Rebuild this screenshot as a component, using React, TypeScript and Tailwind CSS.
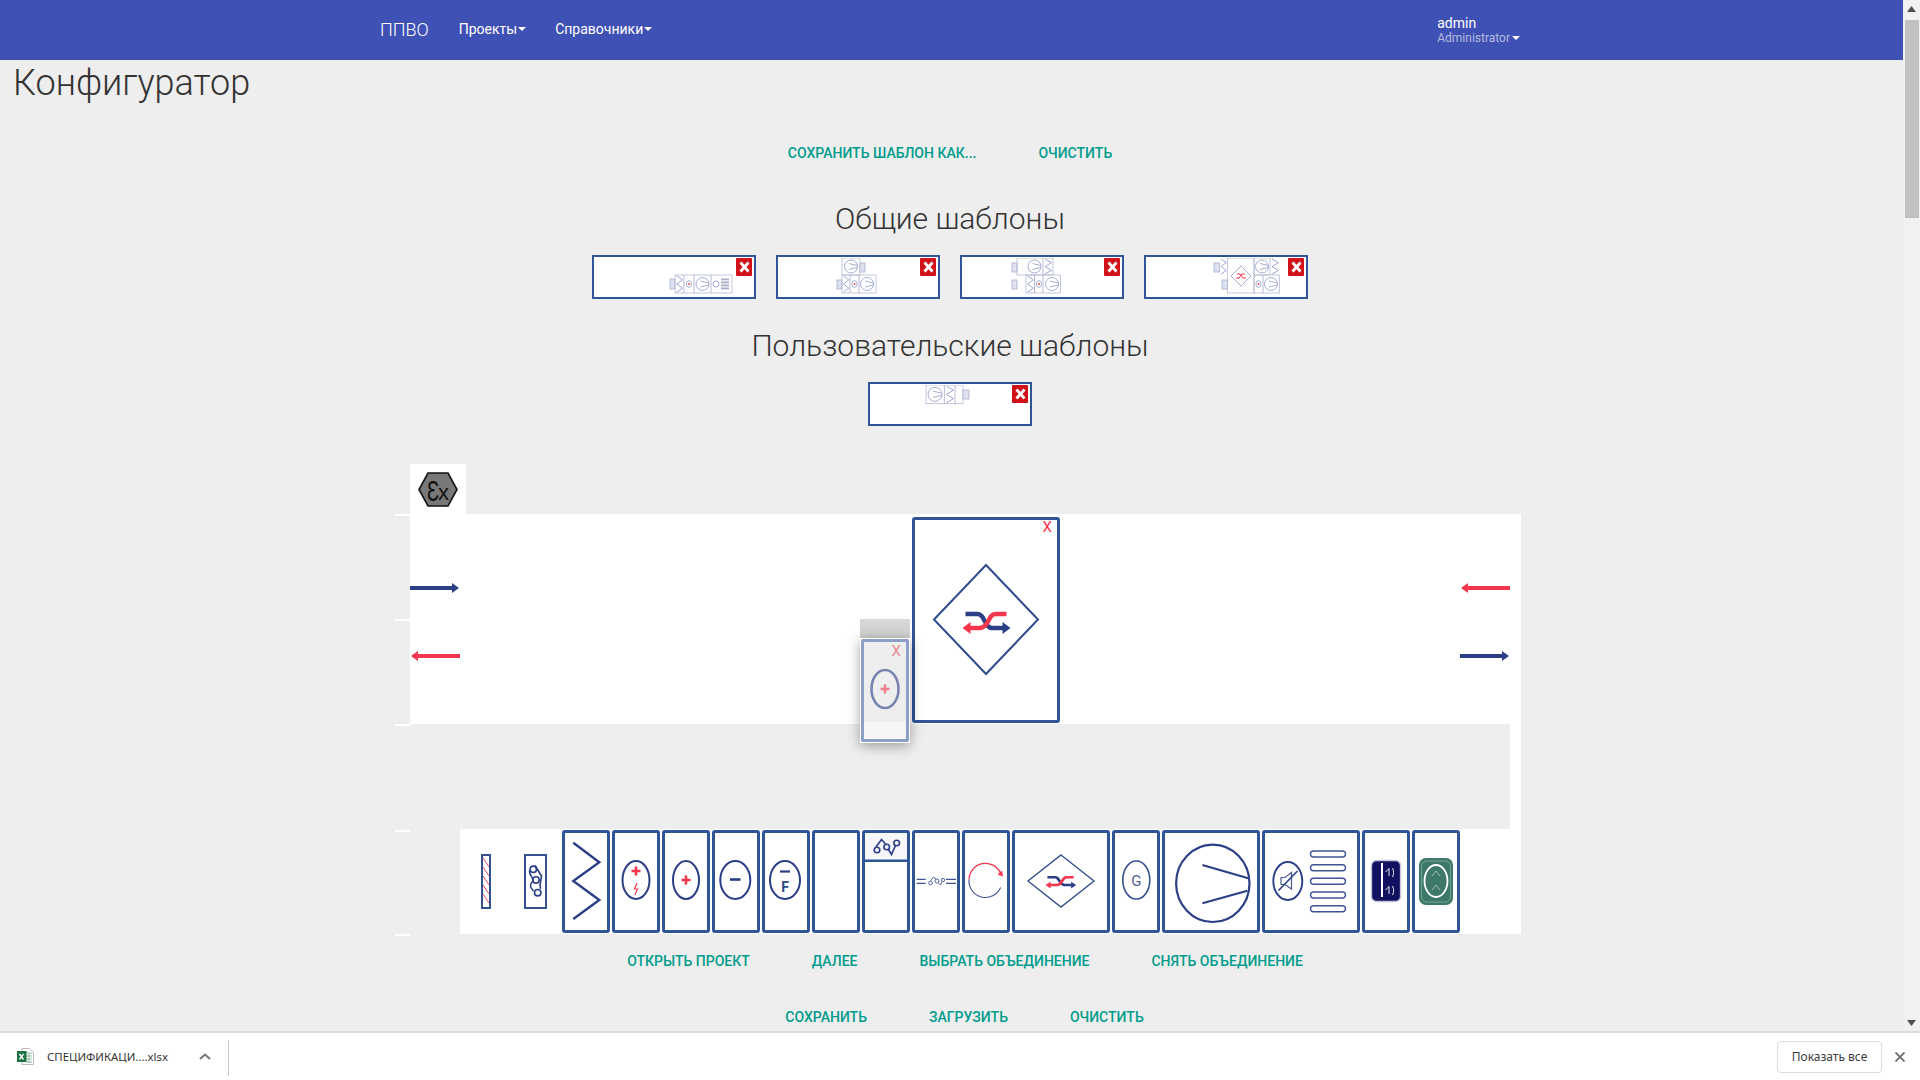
import React from "react";

const NAVY = "#2b3f86";
const RED = "#f4364c";
const MINI = "#939ac8";

// --- template thumbnails ---
const Fan = ({ cx, cy, r }: { cx: number; cy: number; r: number }) => (
  <g fill="none" stroke={MINI} strokeWidth="0.8">
    <circle cx={cx} cy={cy} r={r} />
    <path d={`M${cx - r * 0.3} ${cy - r * 0.45} L${cx + r} ${cy - r * 0.15} M${cx - r * 0.3} ${cy + r * 0.45} L${cx + r} ${cy + r * 0.15}`} />
  </g>
);

const Zig = ({ x, y, w, h }: { x: number; y: number; w: number; h: number }) => (
  <polyline
    fill="none"
    stroke={MINI}
    strokeWidth="0.9"
    points={`${x + w * 0.2},${y + 1} ${x + w * 0.85},${y + h * 0.27} ${x + w * 0.2},${y + h * 0.5} ${x + w * 0.85},${y + h * 0.73} ${x + w * 0.2},${y + h - 1}`}
  />
);

const Dot = ({ cx, cy }: { cx: number; cy: number }) => (
  <g>
    <ellipse cx={cx} cy={cy} rx="2.6" ry="3.4" fill="none" stroke={MINI} strokeWidth="0.8" />
    <circle cx={cx} cy={cy} r="0.9" fill={RED} />
  </g>
);

const Box = ({ x, y, w, h, strong }: { x: number; y: number; w: number; h: number; strong?: boolean }) => (
  <rect x={x} y={y} width={w} height={h} fill={strong ? "#dfe1ef" : "none"} stroke={strong ? "#a9afd2" : "#b5bad8"} strokeWidth="0.8" />
);

const Bars = ({ x, y }: { x: number; y: number }) => (
  <g fill="#a9aec9">
    {[0, 3, 6, 9].map((d) => (
      <rect key={d} x={x} y={y + d} width="8" height="1.8" />
    ))}
  </g>
);

const thumbs = [
  <>
    <Box x={75} y={21} w={5} h={10} strong />
    <Box x={80} y={17} w={57} h={18} />
    <path d="M89 17V35M99 17V35M116 17V35" stroke="#a2a8cd" strokeWidth="0.8" />
    <Zig x={80} y={17} w={9} h={18} />
    <Dot cx={94} cy={26} />
    <Fan cx={107.5} cy={26} r={6.5} />
    <circle cx={121} cy={26} r={3} fill="none" stroke={MINI} strokeWidth="0.9" />
    <Bars x={126} y={20.5} />
  </>,
  <>
    <Box x={63} y={0} w={18} h={17} />
    <Fan cx={72} cy={8.5} r={6.5} />
    <Box x={81} y={5} w={5} h={9} strong />
    <Box x={58} y={22} w={5} h={9} strong />
    <Box x={63} y={17} w={34} h={18} />
    <path d="M71 17V35M80 17V35" stroke="#a2a8cd" strokeWidth="0.8" />
    <Zig x={63} y={17} w={8} h={18} />
    <Dot cx={75.5} cy={26} />
    <Fan cx={88} cy={26} r={6.5} />
  </>,
  <>
    <Box x={49} y={5} w={5} h={9} strong />
    <Box x={54} y={0} w={36} h={17} />
    <path d="M80 0V17" stroke="#a2a8cd" strokeWidth="0.8" />
    <Fan cx={71.5} cy={8.5} r={6.5} />
    <Zig x={80} y={0} w={10} h={17} />
    <Box x={49} y={22} w={5} h={9} strong />
    <Box x={63} y={17} w={34.5} h={18} />
    <path d="M71.5 17V35M80 17V35" stroke="#a2a8cd" strokeWidth="0.8" />
    <Zig x={63} y={17} w={8.5} h={18} />
    <Dot cx={76} cy={26} />
    <Fan cx={89} cy={26} r={6.5} />
  </>,
  <>
    <Box x={67} y={5} w={5.5} h={9} strong />
    <Zig x={72.5} y={0} w={8} h={17} />
    <Box x={80.5} y={0} w={26.5} h={35} />
    <path d="M94 8L104 18L94 28L84 18Z" fill="none" stroke={MINI} strokeWidth="0.8" />
    <path d="M90 16H93L96 20H99M98 16H95L92 20H89" fill="none" stroke={RED} strokeWidth="1" />
    <Box x={107} y={0} w={16} h={17} />
    <Fan cx={115} cy={8.5} r={6.5} />
    <Zig x={123} y={0} w={10} h={17} />
    <Box x={75} y={22} w={5.5} h={9} strong />
    <Box x={107} y={17} w={25.5} h={18} />
    <path d="M116 17V35" stroke="#a2a8cd" strokeWidth="0.8" />
    <Dot cx={111.5} cy={26} />
    <Fan cx={124} cy={26} r={6.5} />
  </>,
];

const userThumb = (
  <>
    <Box x={55} y={0} w={37} h={18.7} />
    <path d="M73.4 0V18.7M84 0V18.7" stroke="#a2a8cd" strokeWidth="0.8" />
    <Fan cx={64} cy={9.3} r={7} />
    <Zig x={73.4} y={0} w={10.6} h={18.7} />
    <Box x={92} y={5} w={6} h={9} strong />
  </>
);

const TemplateCard = ({ children }: { children: React.ReactNode }) => (
  <div className="relative h-[44px] w-[164px] border-2 border-[#2f5597] bg-white p-px">
    <svg width="158" height="38" viewBox="0 0 158 38" className="block overflow-hidden">
      {children}
    </svg>
    <div className="absolute right-[2px] top-px flex h-[18px] w-4 items-center justify-center rounded-[1px] bg-[#d0121b]">
      <svg width="11" height="12" viewBox="0 0 11 12">
        <path d="M1.5 1.5L9.5 10.5M9.5 1.5L1.5 10.5" stroke="#fff" strokeWidth="2.8" />
      </svg>
    </div>
  </div>
);

// --- diagram icons ---
const Rings = ({ pts, r = 3 }: { pts: [number, number][]; r?: number }) => (
  <g fill="none" stroke={NAVY} strokeWidth="1.6">
    {pts.map(([x, y]) => (
      <circle key={`${x}-${y}`} cx={x} cy={y} r={r} />
    ))}
  </g>
);

const Shuffle = () => (
  <g fill="none" strokeWidth="4.4">
    <path d="M3 4H15C23 4 21 18 30 18H41" stroke={NAVY} />
    <path d="M48 18L40 12V24Z" fill={NAVY} stroke="none" />
    <path d="M44 4H33C25 4 27 18 17 18H7" stroke={RED} />
    <path d="M0 18L8 12V24Z" fill={RED} stroke="none" />
  </g>
);

const Heater = () => (
  <svg width="42" height="97" viewBox="3 3 42 97" className="block">
    <ellipse cx="24" cy="50" rx="13.5" ry="19" fill="none" stroke={NAVY} strokeWidth="2.6" />
    <path d="M19.5 50H28.5M24 45.5V54.5" stroke={RED} strokeWidth="2.6" />
  </svg>
);

const icon = (w: number, body: React.ReactNode) => (
  <svg width={w - 6} height="97" viewBox={`3 3 ${w - 6} 97`} className="block">
    {body}
  </svg>
);

const modules: { w: number; body?: React.ReactNode }[] = [
  {
    w: 48,
    body: (
      <polyline
        points="11.3,12.7 37.3,32.3 11.3,51 37.3,70 11.3,89"
        fill="none"
        stroke={NAVY}
        strokeWidth="2.4"
      />
    ),
  },
  {
    w: 48,
    body: (
      <>
        <ellipse cx="24" cy="50" rx="13.5" ry="19" fill="none" stroke={NAVY} strokeWidth="2" />
        <path d="M19.5 41H28.5M24 36.5V45.5" stroke={RED} strokeWidth="2.6" />
        <path d="M25 53L22.5 59H25.5L23 65" fill="none" stroke={RED} strokeWidth="1.2" />
      </>
    ),
  },
  {
    w: 48,
    body: (
      <>
        <ellipse cx="24" cy="50" rx="13" ry="19" fill="none" stroke={NAVY} strokeWidth="2" />
        <path d="M19.5 50H28.5M24 45.5V54.5" stroke={RED} strokeWidth="2.6" />
      </>
    ),
  },
  {
    w: 48,
    body: (
      <>
        <ellipse cx="23.3" cy="50" rx="15" ry="19" fill="none" stroke={NAVY} strokeWidth="2" />
        <path d="M18 49.5H28.5" stroke={NAVY} strokeWidth="2.6" />
      </>
    ),
  },
  {
    w: 48,
    body: (
      <>
        <ellipse cx="23" cy="50" rx="15" ry="19" fill="none" stroke={NAVY} strokeWidth="2" />
        <path d="M18 41.5H28" stroke={NAVY} strokeWidth="2.2" />
        <text x="23" y="62" textAnchor="middle" fontSize="14" fontWeight="700" fill="#2b4a8a" fontFamily="Roboto, sans-serif">
          F
        </text>
      </>
    ),
  },
  { w: 48 },
  {
    w: 48,
    body: (
      <>
        <rect x="3" y="3" width="42" height="26.5" fill="#f6f6fb" />
        <path d="M3 30.8H45" stroke="#2f5597" strokeWidth="2.4" />
        <Rings pts={[[15, 20], [24.7, 17], [34.7, 13]]} r={2.8} />
        <path d="M14 17L19.5 9.5L23.5 14M26.5 19.5L29.5 24.5L33.5 15.5" fill="none" stroke={NAVY} strokeWidth="1.7" />
      </>
    ),
  },
  {
    w: 48,
    body: (
      <>
        <path d="M4.7 49.3H13.7M4.7 53.3H13.7M34 49.3H44M34 53.3H44" stroke="#3f5596" strokeWidth="1.2" />
        <g fill="none" stroke="#3f5596" strokeWidth="0.9">
          <circle cx="18.5" cy="53" r="1.8" />
          <circle cx="25" cy="51" r="2" />
          <circle cx="31" cy="50" r="1.6" />
          <path d="M18.5 51L21.5 47L24 49M26.5 53L28.5 55L30 51.5" />
        </g>
      </>
    ),
  },
  {
    w: 48,
    body: (
      <>
        <path d="M7 49.5A16.5 16.5 0 0 1 38.5 43" fill="none" stroke={RED} strokeWidth="1.3" />
        <path d="M41 46.5L35.5 44.5L40 40.5Z" fill={RED} />
        <path d="M7 49.5A16.5 16.5 0 0 0 38.6 57.5" fill="none" stroke="#3f5596" strokeWidth="1.1" />
      </>
    ),
  },
  {
    w: 98,
    body: (
      <>
        <path d="M49 25L82 51L49 77L16 51Z" fill="none" stroke="#34508f" strokeWidth="1.4" />
        <g transform="translate(33.5 45) scale(0.64 0.56)">
          <Shuffle />
        </g>
      </>
    ),
  },
  {
    w: 48,
    body: (
      <>
        <ellipse cx="24.3" cy="50" rx="13.5" ry="19" fill="none" stroke="#34508f" strokeWidth="1.6" />
        <text x="24.3" y="55.5" textAnchor="middle" fontSize="15" fill="#55648f" fontFamily="Roboto, sans-serif">
          G
        </text>
      </>
    ),
  },
  {
    w: 98,
    body: (
      <>
        <ellipse cx="50.8" cy="53.3" rx="36.7" ry="38.7" fill="none" stroke={NAVY} strokeWidth="2.2" />
        <path d="M40.4 35L86.2 48.3M40.4 73.3L85.5 60.7" stroke={NAVY} strokeWidth="2.2" />
      </>
    ),
  },
  {
    w: 98,
    body: (
      <>
        <ellipse cx="25.8" cy="51" rx="14.5" ry="19" fill="none" stroke={NAVY} strokeWidth="1.9" />
        <path d="M19 47.5H23L29.5 42.5V59L23 54.5H19Z" fill="none" stroke="#4b5c93" strokeWidth="1.2" />
        <path d="M16.5 60.5L35.5 41" stroke={NAVY} strokeWidth="1.6" />
        {[24, 37.7, 51.3, 65, 78.7].map((y) => (
          <rect key={y} x="48.5" y={y - 3} width="35" height="6" rx="3" fill="none" stroke="#3f5596" strokeWidth="1.4" />
        ))}
      </>
    ),
  },
  {
    w: 48,
    body: (
      <>
        <rect x="9.5" y="30.5" width="29" height="41" rx="5" fill="#10125f" stroke="#c2c5dc" strokeWidth="1.3" />
        <path d="M20 33V67" stroke="#fff" strokeWidth="2" />
        <path d="M23.5 42L27 38.5V46M30.5 38C32 41 32 44 30.5 47M23.5 60L27 56.5V64M30.5 56C32 59 32 62 30.5 65" fill="none" stroke="#fff" strokeWidth="0.9" />
      </>
    ),
  },
  {
    w: 48,
    body: (
      <>
        <rect x="7" y="28" width="34" height="47" rx="7" fill="#3e7868" />
        <rect x="9.5" y="31" width="29" height="41" rx="5" fill="none" stroke="#8db3a6" strokeWidth="0.7" />
        <ellipse cx="24" cy="51" rx="11.5" ry="16" fill="#3e7868" stroke="#fff" strokeWidth="1.8" />
        <path d="M20 46L24 41L28 46M20 60L24 55L28 60" fill="none" stroke="#9cc0b4" strokeWidth="1" />
      </>
    ),
  },
];

const Module = ({ w, body }: { w: number; body?: React.ReactNode }) => (
  <div
    className={`flex h-[103px] shrink-0 rounded-[3px] border-[3px] border-[#2f5597] bg-white ${w === 98 ? "w-[98px]" : "w-[48px]"}`}
  >
    {body ? icon(w, body) : null}
  </div>
);

const Arrow = ({ color, dir }: { color: string; dir: "left" | "right" }) => (
  <svg width="50" height="12" viewBox="0 0 50 12" className="block">
    {dir === "right" ? (
      <>
        <path d="M0 6H43" stroke={color} strokeWidth="4" />
        <path d="M49 6L42 1V11Z" fill={color} />
      </>
    ) : (
      <>
        <path d="M50 6H7" stroke={color} strokeWidth="4" />
        <path d="M1 6L8 1V11Z" fill={color} />
      </>
    )}
  </svg>
);

const FlatButton = ({ label }: { label: string }) => (
  <button className="flex h-9 items-center whitespace-nowrap px-[31px] text-[14px] font-medium uppercase text-[#009c8c]">
    {label}
  </button>
);

const Caret = ({ className }: { className?: string }) => (
  <span className={`inline-block h-0 w-0 border-x-[4px] border-t-[4px] border-x-transparent border-t-white ${className ?? ""}`} />
);

const Scrollbar = () => (
  <div className="flex h-full w-[17px] shrink-0 flex-col items-center bg-[#f1f1f1]">
    <div className="flex h-[17px] w-full items-center justify-center">
      <svg width="9" height="6" viewBox="0 0 9 6">
        <path d="M4.5 0L9 6H0Z" fill="#505050" />
      </svg>
    </div>
    <div className="mt-[3px] h-[198px] w-[14px] bg-[#c1c1c1]" />
    <div className="flex-1" />
    <div className="flex h-[17px] w-full items-center justify-center">
      <svg width="9" height="6" viewBox="0 0 9 6">
        <path d="M0 0H9L4.5 6Z" fill="#505050" />
      </svg>
    </div>
  </div>
);

const DownloadBar = () => (
  <div className="flex h-[49px] shrink-0 items-center border-t-2 border-[#dcdcdc] bg-white font-['Noto_Sans',sans-serif]">
    <svg width="17" height="17" viewBox="0 0 17 17" className="ml-[17px] shrink-0">
      <path d="M5 .5H12.5L16.5 4.5V16.5H5Z" fill="#fff" stroke="#a8a8a8" strokeWidth=".8" />
      <path d="M9 5H15M9 8H15M9 11H15M9 14H15M12 5V15" stroke="#7fb894" strokeWidth=".9" />
      <rect x="0" y="3" width="9.5" height="11" fill="#1f7244" />
      <path d="M2.5 6L6.5 11.5M6.5 6L2.5 11.5" stroke="#fff" strokeWidth="1.3" />
    </svg>
    <span className="ml-[13px] w-[122px] whitespace-nowrap text-[11.4px] text-[#333]">СПЕЦИФИКАЦИ....xlsx</span>
    <svg width="12" height="7" viewBox="0 0 12 7" className="ml-[30px] shrink-0">
      <path d="M1 6L6 1.5L11 6" fill="none" stroke="#777" strokeWidth="2" />
    </svg>
    <div className="ml-[17px] mt-[2px] h-[36px] w-px bg-[#c8c8c8]" />
    <div className="flex-1" />
    <button className="flex h-[32px] w-[105px] items-center justify-center rounded-[4px] border border-[#dadce0] text-[12px] text-[#3c3c3c]">
      Показать все
    </button>
    <svg width="10" height="10" viewBox="0 0 10 10" className="ml-[13px] mr-[15px] shrink-0">
      <path d="M.5 .5L9.5 9.5M9.5 .5L.5 9.5" stroke="#6b6b6b" strokeWidth="1.8" />
    </svg>
  </div>
);

export default function App() {
  return (
    <div className="flex h-[1080px] w-[1920px] flex-col overflow-hidden bg-[#eeeeee] font-['Roboto',sans-serif]">
      <div className="flex h-[1031px] shrink-0">
        <div className="relative w-[1903px] shrink-0 overflow-hidden">
          {/* navbar */}
          <nav className="flex h-[60px] items-center bg-[#3f51b5] pb-[2px] pl-[380px] text-white">
            <span className="text-[18px] font-light">ППВО</span>
            <span className="ml-[30px] flex items-center gap-px text-[14px]">
              Проекты <Caret />
            </span>
            <span className="ml-[29px] flex items-center gap-px text-[14px]">
              Справочники <Caret />
            </span>
            <div className="ml-[785px] mt-[2px] flex flex-col leading-none">
              <span className="text-[14px]">admin</span>
              <span className="mt-[2px] flex items-center text-[12px] text-[#b4bade]">
                Administrator
                <Caret className="ml-[2px]" />
              </span>
            </div>
          </nav>

          <h1 className="-mt-px ml-[13px] h-[48px] text-[36px] font-light leading-[48px] text-[#333]">Конфигуратор</h1>

          <div className="w-[1900px]">
            <div className="mt-[28px] flex justify-center">
              <FlatButton label="Сохранить шаблон как..." />
              <FlatButton label="Очистить" />
            </div>

            <h2 className="mt-[26px] h-[44px] text-center text-[30px] font-light leading-[44px] text-[#333]">Общие шаблоны</h2>
            <div className="mt-[14px] flex justify-center gap-5">
              {thumbs.map((t, i) => (
                <TemplateCard key={i}>{t}</TemplateCard>
              ))}
            </div>

            <h2 className="mt-[25px] h-[44px] text-center text-[30px] font-light leading-[44px] text-[#333]">
              Пользовательские шаблоны
            </h2>
            <div className="mt-[14px] flex justify-center">
              <TemplateCard>{userThumb}</TemplateCard>
            </div>
          </div>

          {/* constructor */}
          <div className="relative ml-[410px] mt-[38px] w-[1111px]">
            <div className="flex h-[50px] w-[56px] items-start bg-white pl-2 pt-2">
              <svg width="40" height="35" viewBox="0 0 40 35" className="block">
                <path d="M10 1H30L39 17.5L30 34H10L1 17.5Z" fill="#787878" stroke="#111" strokeWidth="1.6" />
                <text transform="translate(9 28.5) scale(0.68 1)" fontSize="30" fill="#111" fontFamily="'Liberation Sans', sans-serif">
                  Ɛ
                </text>
                <text x="20" y="28" fontSize="22" fill="#111" fontFamily="'Liberation Sans', sans-serif">
                  x
                </text>
              </svg>
            </div>

            <div className="absolute left-[-15px] top-[50px] h-0.5 w-[15px] bg-white" />
            <div className="absolute left-[-15px] top-[155px] h-0.5 w-[15px] bg-white" />
            <div className="absolute left-[-15px] top-[260px] h-0.5 w-[15px] bg-white" />
            <div className="absolute left-[-15px] top-[366px] h-0.5 w-[15px] bg-white" />
            <div className="absolute left-[-15px] top-[470px] h-0.5 w-[15px] bg-white" />

            <div className="relative h-[210px] bg-white">
              <div className="absolute left-0 top-[68px]">
                <Arrow color={NAVY} dir="right" />
              </div>
              <div className="absolute left-0 top-[136px]">
                <Arrow color={RED} dir="left" />
              </div>
              <div className="absolute left-[1050px] top-[68px]">
                <Arrow color={RED} dir="left" />
              </div>
              <div className="absolute left-[1050px] top-[136px]">
                <Arrow color={NAVY} dir="right" />
              </div>

              {/* placed exchanger */}
              <div className="absolute left-[502px] top-[3px] h-[206px] w-[148px] rounded-[3px] border-[3px] border-[#2f5597] bg-white">
                <span className="absolute right-[5px] top-[-1px] text-[15px] font-normal leading-[16px] text-[#f4364c]">X</span>
                <svg width="142" height="200" viewBox="0 0 142 200" className="block">
                  <path d="M71 45L123 99.5L71 154L19 99.5Z" fill="none" stroke="#2f4b8f" strokeWidth="2" />
                  <g transform="translate(47.5 90)">
                    <Shuffle />
                  </g>
                </svg>
              </div>

              {/* module being dragged */}
              <div className="absolute left-[450px] top-[105px] z-10 h-[19px] w-[50px] bg-[linear-gradient(#d9d9d9,#cdcdcd)]" />
              <div className="absolute left-[450px] top-[124px] z-10 h-[105px] w-[50px] border border-white bg-[linear-gradient(#eeeeee_81%,#f6f6f6_81%)] shadow-[0_3px_12px_rgba(0,0,0,0.35)]">
                <div className="relative h-[103px] w-[48px] rounded-[2px] border-[3px] border-[#8d9fc6]">
                  <span className="absolute right-[5px] top-px text-[15px] font-normal leading-[16px] text-[#e98a92]">X</span>
                  <div className="opacity-60">
                    <Heater />
                  </div>
                </div>
              </div>
            </div>

            <div className="flex h-[105px] justify-end">
              <div className="w-[11px] bg-white" />
            </div>

            <div className="ml-[50px] flex h-[105px] items-center bg-white">
              <div className="flex w-[102px] shrink-0 items-center pl-[21px]">
                <svg width="10" height="55" viewBox="0 0 10 55" className="block">
                  <rect x="1" y="1" width="8" height="53" fill="#fff" stroke="#34508f" strokeWidth="2" />
                  <path d="M2 4L8 13M2 13L8 22M2 22L8 31M2 31L8 40M2 40L8 49" stroke={RED} strokeWidth="0.9" />
                </svg>
                <svg width="23" height="55" viewBox="0 0 23 55" className="ml-[33px] block">
                  <rect x="1" y="1" width="21" height="53" fill="#fff" stroke="#34508f" strokeWidth="2" />
                  <Rings pts={[[9.3, 15.3], [12, 26], [13.7, 38.7]]} r={3.2} />
                  <path d="M5.5 16C5 22 10 24 9 27C6 30 5 33 9.5 37M11 11.5L17.5 22C17 27 15 30 16.5 35" fill="none" stroke={NAVY} strokeWidth="1.6" />
                </svg>
              </div>
              <div className="flex gap-[2px]">
                {modules.map((m, i) => (
                  <Module key={i} w={m.w} body={m.body} />
                ))}
              </div>
            </div>

            <div className="mt-[9px] flex justify-center pr-px">
              <FlatButton label="Открыть проект" />
              <FlatButton label="Далее" />
              <FlatButton label="Выбрать объединение" />
              <FlatButton label="Снять объединение" />
            </div>
            <div className="mt-[20px] flex justify-center pr-[2px]">
              <FlatButton label="Сохранить" />
              <FlatButton label="Загрузить" />
              <FlatButton label="Очистить" />
            </div>
          </div>
        </div>
        <Scrollbar />
      </div>
      <DownloadBar />
    </div>
  );
}
